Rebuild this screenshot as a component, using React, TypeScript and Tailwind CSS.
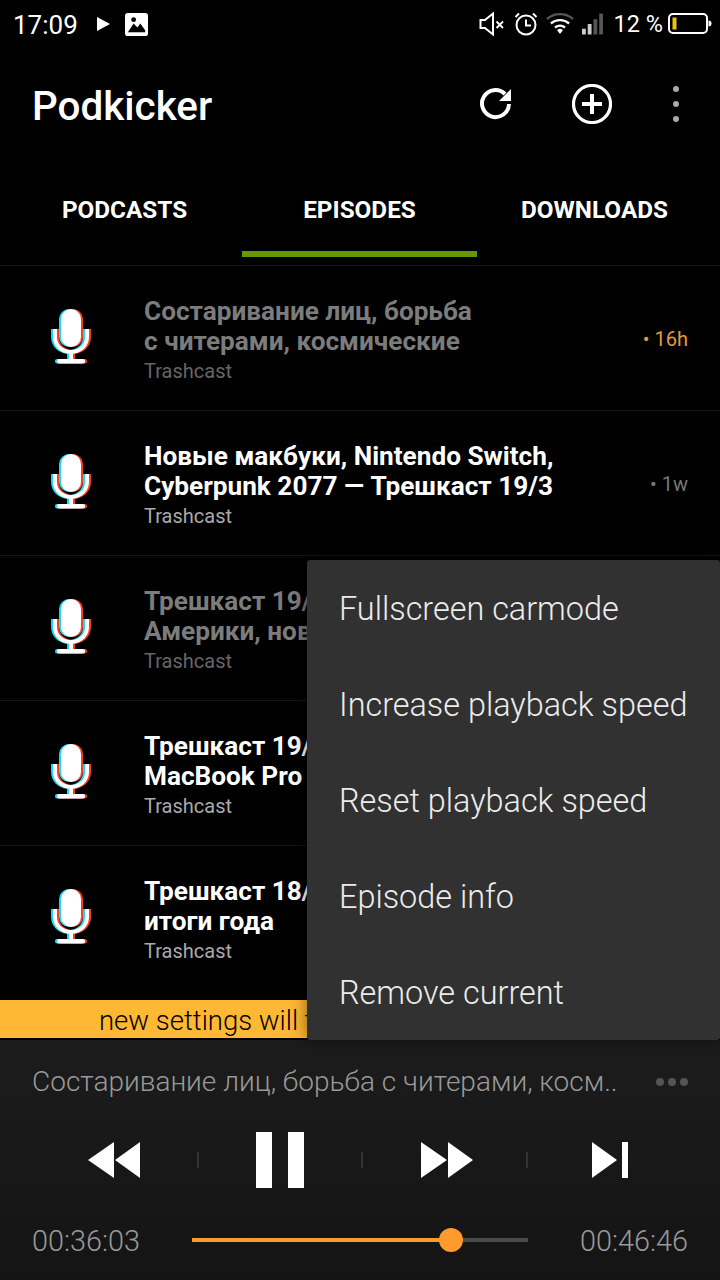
import React from "react";

const Mic = () => (
  <span className="relative block w-[40px] h-[58px]">
    <MicShape className="absolute left-[-2px] top-0 text-[#22d3f5]" />
    <MicShape className="absolute left-[2px] top-0 text-[#f4401c]" />
    <MicShape className="absolute left-0 top-0 text-white" />
  </span>
);

function MicShape({ className }: { className: string }) {
  return (
    <svg width="40" height="58" viewBox="0 0 40 58" className={className} fill="currentColor">
      <rect x="10" y="0" width="20" height="38" rx="10" />
      <path d="M2 20h4v8c0 7.500 6 13 14 13s14-5.500 14-13v-8h4v8c0 9-7 16-16 16.800V51h-4v-6.200C9 44 2 37 2 28z" />
      <rect x="6" y="50" width="28" height="4.500" rx="2" />
    </svg>
  );
}

type Ep = { title: string[]; dim?: boolean; age?: string; ageOrange?: boolean };

const episodes: Ep[] = [
  { title: ["Состаривание лиц, борьба", "с читерами, космические"], dim: true, age: "16h", ageOrange: true },
  { title: ["Новые макбуки, Nintendo Switch,", "Cyberpunk 2077 — Трешкаст 19/3"], age: "1w" },
  { title: ["Трешкаст 19/2", "Америки, новые"], dim: true },
  { title: ["Трешкаст 19/1", "MacBook Pro"] },
  { title: ["Трешкаст 18/12", "итоги года"] },
];

const menu = ["Fullscreen carmode", "Increase playback speed", "Reset playback speed", "Episode info", "Remove current"];

function EpisodeRow({ ep }: { ep: Ep }) {
  return (
    <div className="h-[145px] border-t border-[#161616] flex items-center">
      <div className="w-[144px] shrink-0 pl-[51px]">
        <Mic />
      </div>
      <div className="flex-1 min-w-0 pt-[5px]">
        <div className={`text-[26.200px] leading-[30px] font-bold whitespace-nowrap ${ep.dim ? "text-[#7c7c7c]" : "text-white"}`}>
          {ep.title.map((t) => (
            <div key={t}>{t}</div>
          ))}
        </div>
        <div className={`text-[20px] leading-[28px] mt-[1px] ${ep.dim ? "text-[#666]" : "text-[#aaa]"}`}>Trashcast</div>
      </div>
      {ep.age && (
        <div className={`pr-[32px] text-[20px] pt-[2px] ${ep.ageOrange ? "text-[#e59a3c]" : "text-[#777]"}`}>• {ep.age}</div>
      )}
    </div>
  );
}

function StatusBar() {
  return (
    <div className="h-[48px] flex items-center text-white pl-[13px] text-[26px] leading-none">
      <span className="w-[65px] pt-[2px]">17:09</span>
      <svg width="14" height="16" viewBox="0 0 14 16" className="ml-[18px]" fill="#fff">
        <path d="M1 1l13 7-13 7z" />
      </svg>
      <svg width="23" height="23" viewBox="0 0 24 24" className="ml-[15px]">
        <rect width="24" height="24" rx="3" fill="#fff" />
        <path d="M3 20l6-9 4 4 3-4 5 7v2H3z" fill="#000" />
        <circle cx="9" cy="7" r="2.500" fill="#000" />
      </svg>
      <div className="flex-1" />
      <svg width="26" height="26" viewBox="0 0 26 26" fill="none" stroke="#fff" strokeWidth="2">
        <path d="M1.500 9h4.500l8-6.500v21L6 17H1.500z" />
        <path d="M17.500 10.500l6.500 6.500M24 10.500L17.500 17" strokeWidth="1.800" />
      </svg>
      <svg width="24" height="24" viewBox="0 0 24 24" className="ml-[9px]" fill="none" stroke="#fff" strokeWidth="2">
        <circle cx="12" cy="13" r="9.500" />
        <path d="M12 7.500V13.500h5" />
        <path d="M1.500 5L5 1.500M22.500 5L19 1.500" />
      </svg>
      <svg width="28" height="24" viewBox="0 0 28 24" className="ml-[8px]" fill="none" stroke="#fff" strokeWidth="2.400">
        <path d="M1 7c7-6.500 19-6.500 26 0" stroke="#555" />
        <path d="M5 11.500c5-4.500 13-4.500 18 0" />
        <path d="M9 15.500c3-2.500 7-2.500 10 0" />
        <path d="M11 18l3-1.500 3 1.500-3 4z" fill="#fff" stroke="none" />
      </svg>
      <svg width="21" height="24" viewBox="0 0 22 24" className="ml-[8px]">
        <rect x="0" y="17" width="4" height="6" fill="#ccc" />
        <rect x="6" y="12" width="4" height="11" fill="#ccc" />
        <rect x="12" y="7" width="4" height="16" fill="#555" />
        <rect x="18" y="1" width="4" height="22" fill="#555" />
      </svg>
      <span className="ml-[11px] text-[23.500px] pt-[2px]">12 %</span>
      <svg width="44" height="22" viewBox="0 0 44 22" className="ml-[5px] mr-[8px]" fill="none">
        <rect x="1" y="1" width="38" height="19" rx="4" stroke="#fff" strokeWidth="2" />
        <rect x="4.500" y="4.500" width="4" height="12" fill="#f5c400" />
        <path d="M40.500 7.500c2 0 3 1 3 3s-1 3-3 3z" fill="#fff" />
      </svg>
    </div>
  );
}

function Toolbar() {
  return (
    <div className="h-[112px] flex items-center text-white">
      <h1 className="pl-[32px] pt-[6px] text-[40.400px] font-medium flex-1 leading-none">Podkicker</h1>
      <svg width="36" height="36" viewBox="0 0 36 36" fill="none" stroke="#fff" strokeWidth="4" className="mr-[57px]">
        <path d="M30 18a13.500 13.500 0 1 1-4-10" />
        <path d="M32 3v12H20z" fill="#fff" stroke="none" />
      </svg>
      <svg width="40" height="40" viewBox="0 0 40 40" fill="none" stroke="#fff" className="mr-[61px]">
        <circle cx="20" cy="20" r="18.500" strokeWidth="3.200" />
        <path d="M20 10v20M10 20h20" strokeWidth="4" />
      </svg>
      <div className="flex flex-col gap-[9px] mr-[41px]">
        <span className="block w-[6px] h-[6px] rounded-full bg-[#aaa]" />
        <span className="block w-[6px] h-[6px] rounded-full bg-[#aaa]" />
        <span className="block w-[6px] h-[6px] rounded-full bg-[#aaa]" />
      </div>
    </div>
  );
}

function Tabs() {
  return (
    <div className="h-[105px] flex text-white text-[24.300px] font-bold leading-none pl-[7px] pr-[8px] pb-[8px]">
      {["PODCASTS", "EPISODES", "DOWNLOADS"].map((t, i) => (
        <div key={t} className={`flex-1 flex items-center justify-center pt-[9px] ${i === 1 ? "border-b-[6px] border-[#669900]" : "mb-[6px]"}`}>
          {t}
        </div>
      ))}
    </div>
  );
}

function Player() {
  return (
    <div className="h-[240px] bg-gradient-to-b from-[#1c1c1c] to-[#141414] text-[#999] px-[32px] flex flex-col">
      <div className="h-[84px] flex items-center text-[28px] font-light">
        <span className="flex-1">Состаривание лиц, борьба с читерами, косм..</span>
        <div className="flex gap-[4px]">
          <span className="block w-[8px] h-[8px] rounded-full bg-[#555]" />
          <span className="block w-[8px] h-[8px] rounded-full bg-[#555]" />
          <span className="block w-[8px] h-[8px] rounded-full bg-[#555]" />
        </div>
      </div>
      <div className="h-[72px] flex items-center pl-[56px] mr-[27px]">
        <svg width="52" height="36" viewBox="0 0 52 36" fill="#fff"><path d="M26 0v36L0 18zM52 0v36L27 18z" /></svg>
        <span className="block w-[2px] h-[16px] bg-[#333] ml-[57px]" />
        <div className="flex gap-[16px] ml-[57px]">
          <span className="block w-[16px] h-[56px] bg-white" />
          <span className="block w-[16px] h-[56px] bg-white" />
        </div>
        <span className="block w-[2px] h-[16px] bg-[#333] ml-[57px]" />
        <svg width="52" height="36" viewBox="0 0 52 36" fill="#fff" className="ml-[58px]"><path d="M0 0v36l26-18zM27 0v36l25-18z" /></svg>
        <span className="block w-[2px] h-[16px] bg-[#333] ml-[53px]" />
        <svg width="36" height="36" viewBox="0 0 36 36" fill="#fff" className="ml-[64px]"><path d="M0 0v36l25-18zM30 0h6v36h-6z" /></svg>
      </div>
      <div className="flex-1 flex items-center text-[28.800px] font-light pt-[6px]">
        <span className="w-[160px] pt-[2px]">00:36:03</span>
        <div className="w-[336px] h-[4px] mb-[2px] bg-[#4a4a4a] relative flex items-center">
          <div className="w-[259px] h-[4px] bg-[#ff9a2e]" />
          <span className="absolute left-[247px] top-[-10px] block w-[24px] h-[24px] rounded-full bg-[#ff9a2e]" />
        </div>
        <span className="flex-1 text-right pt-[2px]">00:46:46</span>
      </div>
    </div>
  );
}

export default function App() {
  return (
    <div className="relative w-[720px] h-[1280px] bg-black overflow-hidden font-['Roboto',sans-serif]">
      <StatusBar />
      <Toolbar />
      <Tabs />
      {episodes.map((ep) => (
        <EpisodeRow key={ep.title[0]} ep={ep} />
      ))}
      <div className="mt-[10px] h-[40px] bg-[#ffb833] text-black text-[27.500px] font-light leading-[41px] pl-[99px] whitespace-nowrap overflow-hidden border-b-[2px] border-black">
        new settings will take effect
      </div>
      <Player />
      <div className="absolute left-[307px] top-[560px] w-[413px] h-[480px] bg-[#313131] rounded-[3px] shadow-[0_0_16px_rgba(0,0,0,0.5)]">
        {menu.map((m) => (
          <div key={m} className="h-[96px] flex items-center pl-[32px] pt-[2px] text-[32.400px] font-light text-[#ececec] whitespace-nowrap">
            {m}
          </div>
        ))}
      </div>
    </div>
  );
}
